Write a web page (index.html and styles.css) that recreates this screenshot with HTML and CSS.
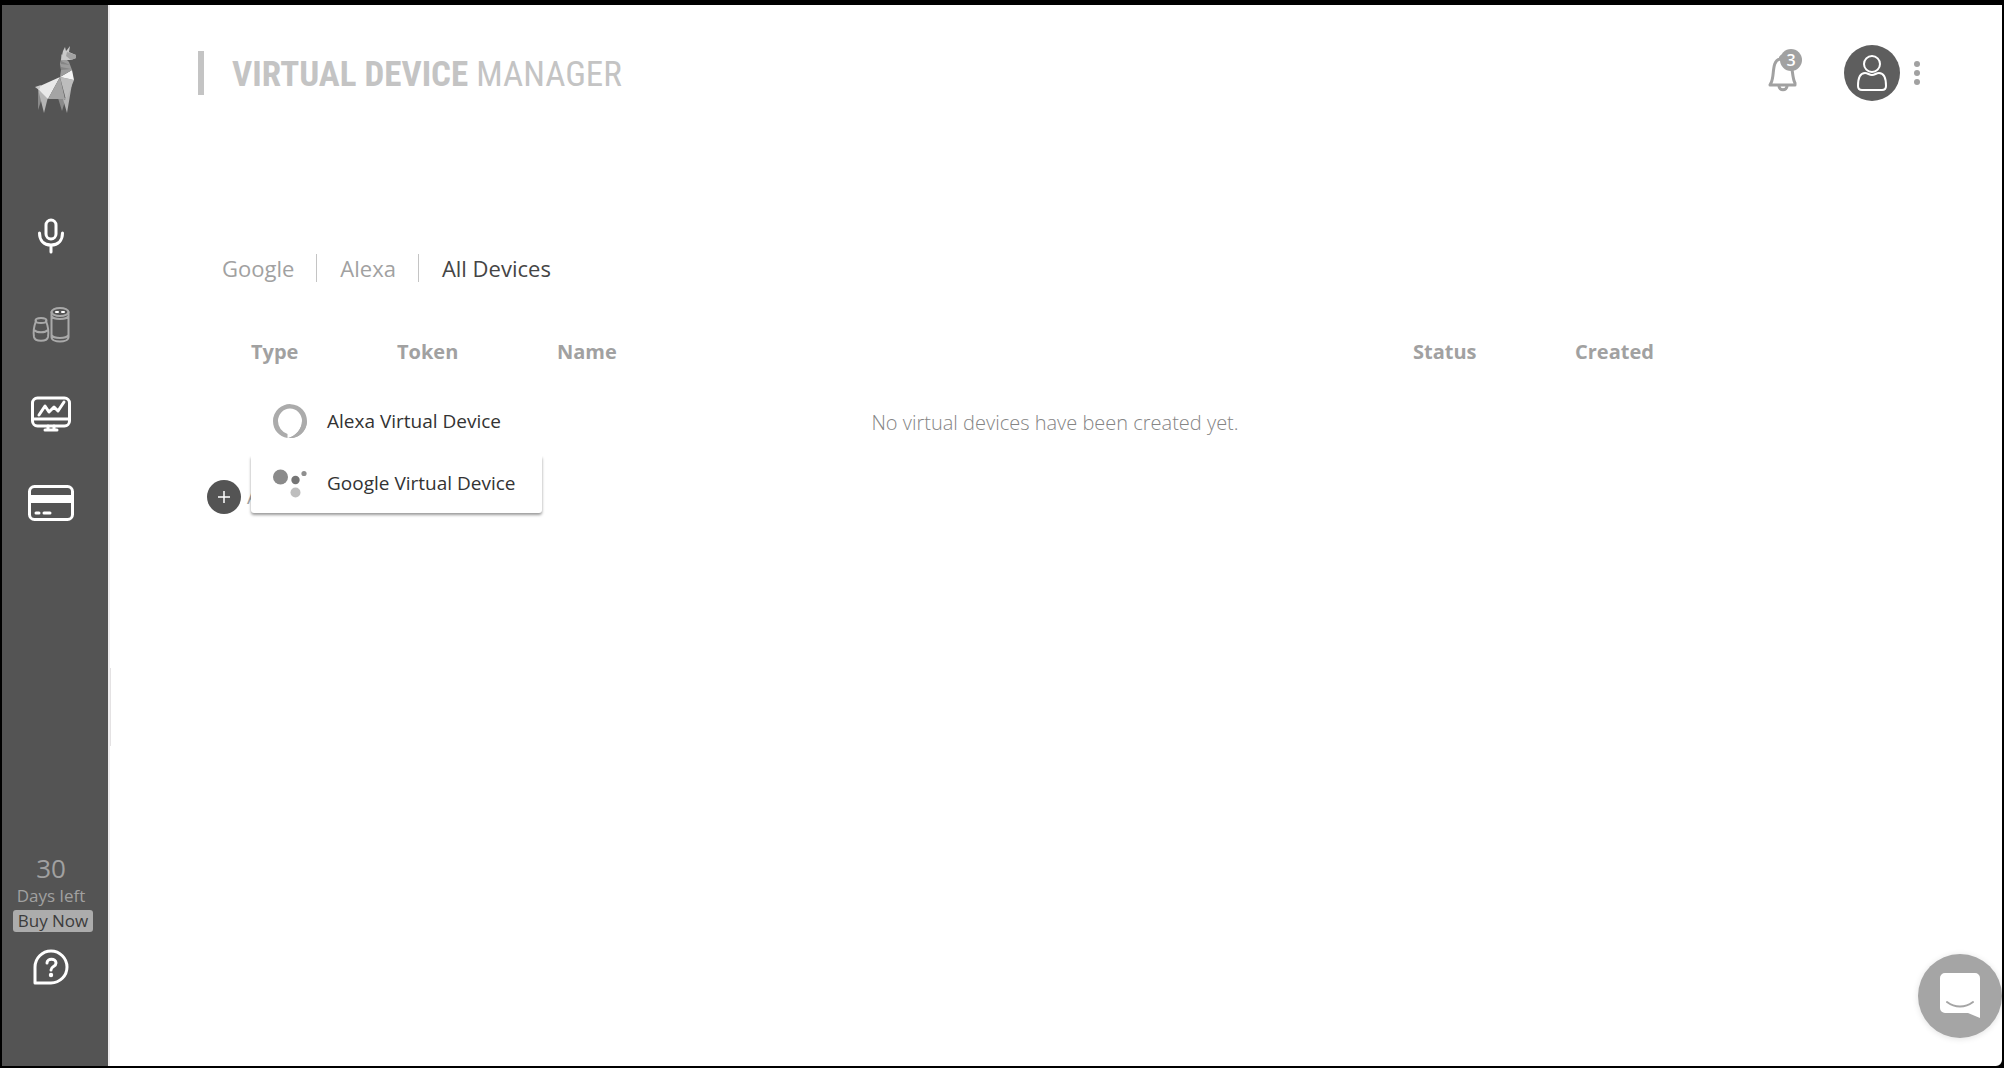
FILE: index.html
```html
<!DOCTYPE html>
<html lang="en">
<head>
<meta charset="utf-8">
<title>Virtual Device Manager</title>
<link rel="stylesheet" href="styles.css">
</head>
<body>
<div class="app">
  <aside class="sidebar">
    <a class="logo" href="#" aria-label="Home">
      <svg width="42" height="68" viewBox="0 0 42 68">
        <path fill="#8a8a8a" d="M3 44l4 8-4 12zM23 52l8 0-4 13z"/>
        <path fill="#b5b5b5" d="M3 43l10 8-4 16zM30 54l8-22-6 35-4-14z"/>
        <path fill="#e9e9e9" d="M5 40L25 31 13 53 3 43z"/>
        <path fill="#a4a4a4" d="M25 31l5 22H13z"/>
        <path fill="#bdbdbd" d="M25 31l14 3-8 20z"/>
        <path fill="#f4f4f4" d="M25 31l12-7 2 10z"/>
        <path fill="#9c9c9c" d="M26 8l8 8 3 8-12 7 1-7-1-6 1-5z"/>
        <path fill="#858585" d="M26 15l9 4-9-1zM26 21l10 2-10 1z"/>
        <path fill="#c9c9c9" d="M0 41l6-2-2 5zM32 4l3-4-1 6 7 3v3l-5 2-10 0 2-9 2-4 1 4z"/>
        <path fill="#a2a2a2" d="M32 6l9 3v3l-5 2-5-4z"/>
      </svg>
    </a>
    <nav class="side-nav" aria-label="Main">
      <a href="#" aria-label="Voice">
        <svg width="46" height="36" viewBox="0 0 46 36" class="line"><rect x="18" y="2" width="10" height="19" rx="5"/><path d="M11.500 15c0 7 4 12 11.500 12s11.500-5 11.500-12M23 27v7"/></svg>
      </a>
      <a href="#" class="current" aria-label="Virtual devices">
        <svg width="46" height="36" viewBox="0 0 46 36" class="line thin"><ellipse cx="32" cy="5" rx="8.500" ry="4"/><path d="M23.500 5v25c0 6 17 6 17 0V5M23.500 9c2 4 15 4 17 0M23.500 28c2 4 15 4 17 0M8 14c-2 5-3 10-2 16 1 5 13 5 14 0 1-6 0-11-2-16M6 23c3 3 11 3 14 0"/><ellipse cx="13" cy="13.500" rx="5.500" ry="2.500"/><path class="lights" d="M28 5h2M34 5h2"/></svg>
      </a>
      <a href="#" aria-label="Monitoring">
        <svg width="46" height="36" viewBox="0 0 46 36" class="line"><rect x="4.500" y="2" width="37" height="28" rx="5"/><path d="M5 23h36M11 19l6-9 4 6 5-5 4 4 6-9M20 30v3M26 30v3M17 34h12"/></svg>
      </a>
      <a href="#" aria-label="Billing">
        <svg width="46" height="36" viewBox="0 0 46 36" class="line"><rect x="1.500" y="1.500" width="43" height="33" rx="5"/><path fill="#fff" stroke="none" d="M2 10h42v8H2z"/><path d="M8 28h3M16 28h6"/></svg>
      </a>
    </nav>
    <div class="trial">
      <span class="days">30</span>
      <span class="left">Days left</span>
      <button class="buy" type="button">Buy Now</button>
      <a class="help" href="#" aria-label="Help">
        <svg width="36" height="36" viewBox="0 0 36 36" class="line"><path d="M2 34V18A16 16 0 1 1 18 34z"/><path d="M14 14c0-5 9-5 9 0 0 4-5 3-5 7"/><circle cx="18" cy="26" r="2.200" fill="#fff" stroke="none"/></svg>
      </a>
    </div>
  </aside>
  <div class="page">
    <header class="topbar">
      <h1><strong>VIRTUAL DEVICE</strong> MANAGER</h1>
      <div class="account">
        <button class="bell" type="button" aria-label="Notifications">
          <svg width="30" height="38" viewBox="0 0 30 38"><path fill="none" stroke="#a1a1a1" stroke-width="3" stroke-linejoin="round" d="M3 29c4-7 0-22 9-24 1-4 5-4 6 0 8 2 5 17 9 24v2H2z"/><path fill="none" stroke="#a1a1a1" stroke-width="3" d="M11 32c0 5 8 5 8 0"/></svg>
          <span class="badge">3</span>
        </button>
        <button class="avatar" type="button" aria-label="Account">
          <svg width="30" height="36" viewBox="0 0 30 36"><g fill="none" stroke="#fff" stroke-width="2"><circle cx="15" cy="9" r="8"/><path d="M8 18c-5 0-7 4-7 13 0 2 1 4 4 4h20c3 0 4-2 4-4 0-9-2-13-7-13-3 0-4 2-7 2s-4-2-7-2z"/></g></svg>
        </button>
        <button class="more" type="button" aria-label="More"><i></i><i></i><i></i></button>
      </div>
    </header>
    <main class="content">
      <nav class="tabs" aria-label="Device filter">
        <a href="#">Google</a><a href="#">Alexa</a><a href="#" class="active">All Devices</a>
      </nav>
      <table class="devices">
        <thead><tr><th class="type">Type</th><th class="token">Token</th><th>Name</th><th class="status">Status</th><th class="created">Created</th></tr></thead>
        <tbody><tr><td colspan="5">No virtual devices have been created yet.</td></tr></tbody>
      </table>
      <div class="add">
        <button class="add-button" type="button"><svg width="34" height="34" viewBox="0 0 34 34"><circle cx="17" cy="17" r="17" fill="#545454"/><path stroke="#fff" stroke-width="1.500" d="M11 17h12M17 11v12"/></svg><span>Add</span></button>
        <div class="menu">
          <button type="button">
            <svg width="34" height="34" viewBox="0 0 34 34"><path fill="#ababab" d="M14.500 34v-4A13.500 13.500 0 0 1 5 17a12 12.500 0 0 1 24 0c0 8-6 15-14 17A17 17 0 1 0 0 17c0 9 6 15.500 14.500 17z"/><path fill="#ababab" d="M16 34c7-3 13-9 13-17l5 0a17 17 0 0 1-18 17z"/></svg>
            Alexa Virtual Device
          </button>
          <button type="button" class="lower">
            <svg width="34" height="34" viewBox="0 0 34 34"><circle cx="7.500" cy="11" r="7.500" fill="#8a8a8a"/><circle cx="22.500" cy="14" r="4.200" fill="#757575"/><circle cx="31" cy="7.500" r="2.600" fill="#8f8f8f"/><circle cx="22.500" cy="26.500" r="5" fill="#bebebe"/></svg>
            Google Virtual Device
          </button>
        </div>
      </div>
    </main>
  </div>
  <button class="chat" type="button" aria-label="Open chat">
    <svg width="40" height="46" viewBox="0 0 40 46"><path fill="#fff" d="M5 0h30a5 5 0 0 1 5 5v40l-12-5H5a5 5 0 0 1-5-5V5a5 5 0 0 1 5-5z"/><path fill="none" stroke="#a5a5a5" stroke-width="2" stroke-linecap="round" d="M7 29c8 6 18 6 26 0"/></svg>
  </button>
</div>
</body>
</html>
```
FILE: styles.css
```css
* { box-sizing: border-box; }
body {
  margin: 0;
  background: #000;
  font-family: "Open Sans", sans-serif;
  color: #a1a1a1;
}
button {
  padding: 0;
  border: 0;
  background: none;
  font: inherit;
  color: inherit;
}
a { color: inherit; text-decoration: none; }
svg { display: block; flex: none; }

.app {
  display: flex;
  min-height: 100vh;
  border: 2px solid #000;
  border-top-width: 5px;
  border-radius: 0 0 8px 0;
  background: #fff;
}

.sidebar {
  position: relative;
  display: flex;
  flex-direction: column;
  flex: none;
  width: 108px;
  padding: 41px 8px 81px 0;
  border-right: 2px solid #efedee;
  background: #545454;
}
.sidebar::after {
  content: "";
  position: absolute;
  right: -3px;
  bottom: 320px;
  width: 1px;
  height: 78px;
  background: #e4e2e3;
}
.logo { margin: 0 auto 0 33px; }
.side-nav {
  display: flex;
  flex-direction: column;
  align-items: center;
  gap: 53px;
  margin-top: 104px;
}
.line {
  fill: none;
  stroke: #fff;
  stroke-width: 3;
  stroke-linecap: round;
  stroke-linejoin: round;
}
.thin { stroke: #a9a9a9; stroke-width: 2; }
.lights { stroke: #fff; }
.trial {
  display: flex;
  flex-direction: column;
  align-items: center;
  margin-top: auto;
}
.days { font-size: 26px; line-height: 32px; }
.left { font-size: 17px; line-height: 24px; }
.buy {
  width: 80px;
  height: 22px;
  margin: 2px 0 17px 4px;
  border-radius: 3px;
  background: #acacac;
  color: #3c3c3c;
  font-size: 17px;
  line-height: 22px;
}

.page { flex: 1; min-width: 0; }
.topbar {
  display: flex;
  align-items: center;
  justify-content: space-between;
  height: 136px;
  padding: 0 82px 0 88px;
}
h1 {
  margin: 0;
  padding: 3px 0 0 28px;
  border-left: 6px solid #c4c4c4;
  color: #c4c4c4;
  font: 35px/41px "Roboto Condensed", Roboto, sans-serif;
}
.account { display: flex; align-items: center; }
.bell { position: relative; margin-right: 46px; }
.badge {
  position: absolute;
  top: -5px;
  right: -4px;
  width: 22px;
  height: 22px;
  border-radius: 50%;
  background: #a1a1a1;
  color: #fff;
  font-size: 16px;
  font-weight: 600;
  line-height: 22px;
}
.avatar {
  display: grid;
  place-items: center;
  width: 56px;
  height: 56px;
  margin-right: 14px;
  border-radius: 50%;
  background: #5e5e5e;
}
.more { display: grid; gap: 3px; }
.more i { width: 6px; height: 6px; border-radius: 50%; background: #a1a1a1; }

.content { padding: 113px 99px 0 97px; }
.tabs { display: flex; align-items: center; margin-left: 15px; font-size: 22px; line-height: 28px; }
.tabs a + a { margin-left: 22px; padding-left: 23px; border-left: 1px solid #c4c4c4; }
.tabs .active { color: #454545; }

.devices {
  width: 100%;
  margin-top: 55px;
  border-collapse: collapse;
  table-layout: fixed;
  font-size: 20px;
  line-height: 30px;
}
.devices th { padding: 0; text-align: left; font-weight: 700; }
.devices .type { width: 190px; padding-left: 44px; }
.devices .token { width: 160px; }
.devices .status { width: 162px; }
.devices .created { width: 328px; }
.devices td { padding: 41px 0 0; text-align: center; font-weight: 300; color: #858585; }

.add { position: relative; margin-top: 42px; }
.add-button { display: flex; align-items: center; gap: 6px; font-size: 20px; line-height: 34px; }
.menu {
  position: absolute;
  left: 44px;
  bottom: 1px;
  width: 291px;
  background: #fff;
}
.menu button {
  display: flex;
  align-items: center;
  gap: 20px;
  width: 100%;
  height: 71px;
  padding: 0 0 0 22px;
  color: #333;
  font-size: 19px;
  line-height: 30px;
  white-space: nowrap;
}
.menu .lower {
  height: 57px;
  padding-bottom: 4px;
  border-radius: 0 0 3px 3px;
  box-shadow: 0 2px 3px rgb(0 0 0 / 40%);
  clip-path: inset(0 -6px -8px -6px);
}

.chat {
  position: fixed;
  right: 2px;
  bottom: 30px;
  display: grid;
  place-items: center;
  width: 84px;
  height: 84px;
  border-radius: 50%;
  background: #a5a5a5;
  box-shadow: 0 1px 6px rgb(0 0 0 / 12%);
}
```
